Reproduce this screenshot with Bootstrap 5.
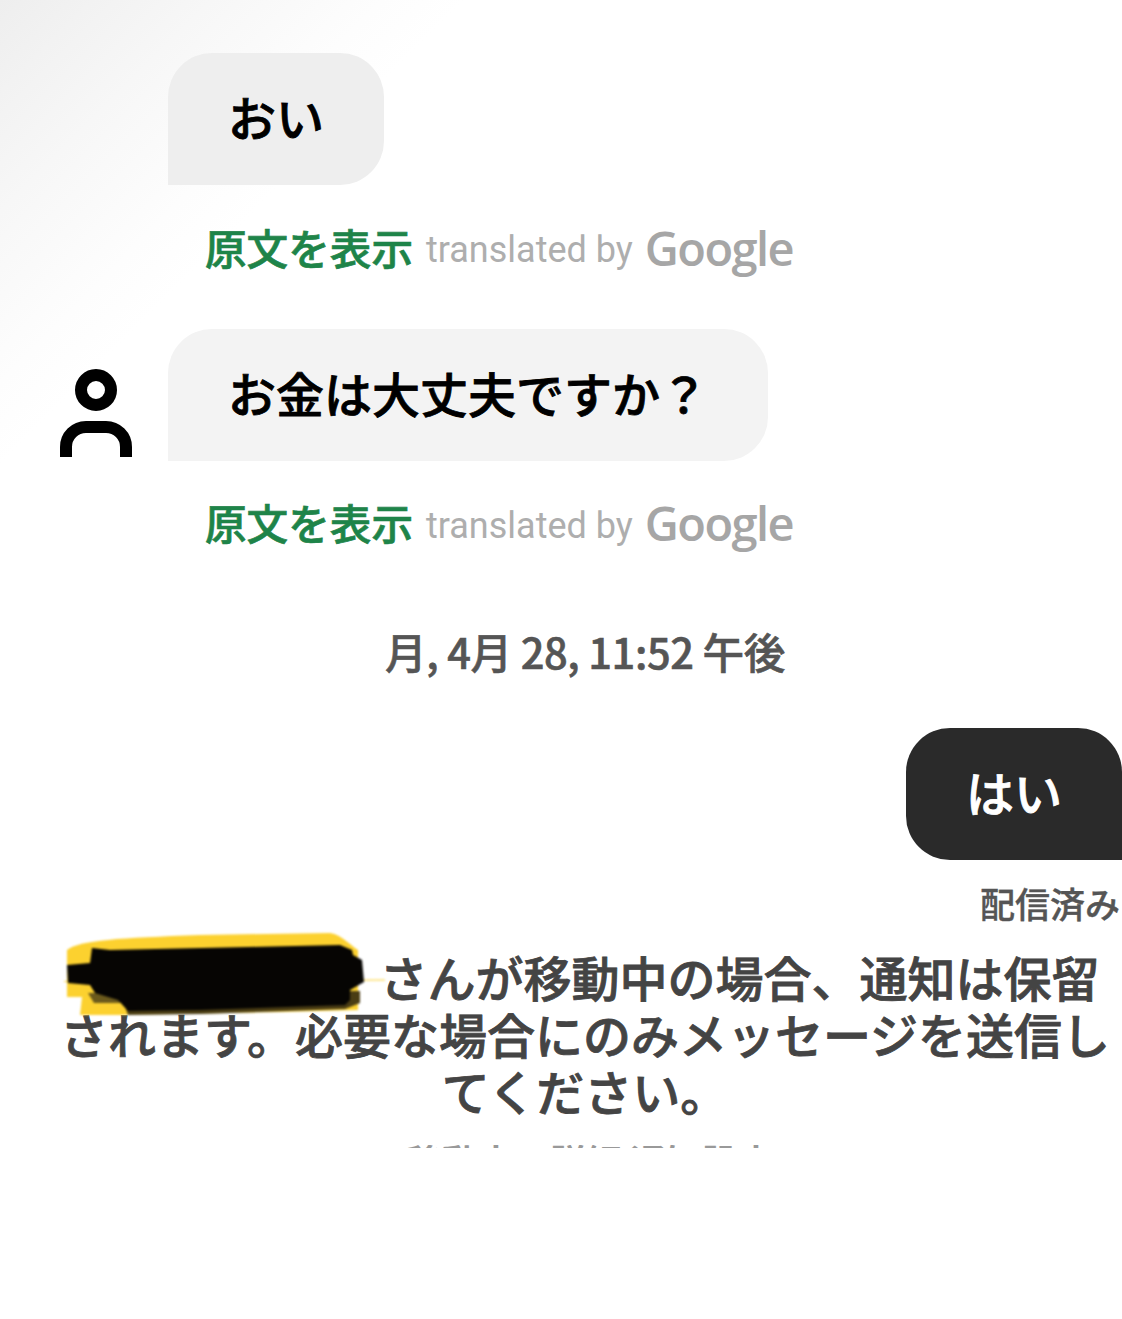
<!DOCTYPE html>
<html lang="ja">
<head>
<meta charset="utf-8">
<title>Chat</title>
<link href="https://cdn.jsdelivr.net/npm/bootstrap@5.3.0/dist/css/bootstrap.min.css" rel="stylesheet">
<style>
html,body{margin:0;background:#fff}
.chat-page{width:1122px;height:1319px;overflow:hidden;padding-top:53px;position:relative;font-family:"Noto Sans CJK JP","Noto Sans",sans-serif;background:linear-gradient(135deg,#eeeeee 0,#f7f7f7 150px,#fdfdfd 270px,#fff 330px)}
.msg-row{padding-left:60px;height:132px}
.avatar-slot{width:72px;margin-right:36px;padding-top:40px}
.bubble-in,.bubble-out{height:132px;padding:0 60px;font-size:48px;font-weight:500;-webkit-text-stroke:.8px currentColor;line-height:126px;white-space:nowrap;border-radius:44px}
.bubble-in{background:#f3f3f3;color:#000;border-bottom-left-radius:0}
.bubble-first{background:#eeeeee}
.bubble-out{background:#2a2a2a;color:#fff;border-bottom-right-radius:0}
.trans-row{height:144px;padding-left:205px;padding-bottom:20px;white-space:nowrap}
.trans-last{height:129px;padding-bottom:6px}
.orig-link{font-size:41.6px;font-weight:500;-webkit-text-stroke:.7px currentColor;color:#1e8449;margin-right:13px}
.trans-by{font-family:Roboto,sans-serif;font-size:36px;color:#aeaeae;margin-right:12px;margin-top:6px}
.g-logo{font-family:"Open Sans",sans-serif;font-size:47px;font-weight:600;color:#a6a6a6;letter-spacing:-1.6px;margin-top:2px}
.date-line{height:138px;padding-left:48px;padding-bottom:16px;font-size:41.6px;font-weight:500;-webkit-text-stroke:.6px currentColor;color:#555;letter-spacing:-.4px}
.sent-state{height:58px;margin-top:20px;padding-right:2px;font-size:35px;font-weight:500;-webkit-text-stroke:.4px currentColor;color:#555;line-height:46px}
.notice-box{font-size:48px;font-weight:500;-webkit-text-stroke:.8px currentColor;line-height:57px;color:#444;text-align:center;padding-left:48px;white-space:nowrap;margin-top:10px}
.name-gap{display:inline-block;width:309px}
.clip-line{height:3px;overflow:hidden;margin-top:26px;padding-left:58px;font-size:36px;line-height:46px;color:#999;font-weight:700;text-align:center;white-space:nowrap}
.clip-inner{margin-top:-8px}
.redact{position:absolute;left:60px;top:925px;width:330px;height:95px;filter:blur(.8px)}
</style>
</head>
<body>
<div class="chat-page">
  <div class="msg-row d-flex">
    <div class="avatar-slot"></div>
    <div class="bubble-in bubble-first">おい</div>
  </div>
  <div class="trans-row d-flex align-items-center">
    <span class="orig-link">原文を表示</span><span class="trans-by">translated by</span><span class="g-logo">Google</span>
  </div>
  <div class="msg-row d-flex">
    <div class="avatar-slot">
      <svg width="72" height="88" viewBox="0 0 72 88" class="d-block">
        <circle cx="36" cy="21" r="15" fill="none" stroke="#000" stroke-width="12"/>
        <path d="M6 88V78A20 20 0 0 1 26 58H46A20 20 0 0 1 66 78V88" fill="none" stroke="#000" stroke-width="12"/>
      </svg>
    </div>
    <div class="bubble-in">お金は大丈夫ですか？</div>
  </div>
  <div class="trans-row trans-last d-flex align-items-center">
    <span class="orig-link">原文を表示</span><span class="trans-by">translated by</span><span class="g-logo">Google</span>
  </div>
  <div class="date-line d-flex align-items-center justify-content-center">月, 4月 28, 11:52 午後</div>
  <div class="d-flex justify-content-end"><div class="bubble-out">はい</div></div>
  <div class="sent-state text-end">配信済み</div>
  <div class="notice-box"><span class="name-gap"></span>さんが移動中の場合、通知は保留<br>されます。必要な場合にのみメッセージを送信し<br>てください。</div>
  <div class="clip-line"><div class="clip-inner">移動中の詳細 通知設定</div></div>
  <svg class="redact" viewBox="0 0 330 95">
    <path d="M7 25C20 15 60 13 140 10L270 8C282 10 290 20 298 25V85L220 87L60 90L20 90L22 72L7 72Z" fill="#fcd12f"/>
    <path d="M4 56.5L325 55" stroke="#fcd12f" stroke-width="1"/>
    <path d="M60 66H300V78L285 84L140 89L68 90Z" fill="#4a3d14"/>
    <path d="M28 68H60V78H34Z" fill="#6b5a1c"/>
    <path d="M32 23L50 25L280 20L292 25L293 30L302 35L304 57L290 65V75L285 80L140 85L68 86L58 75L35 68L30 60L8 58L7 40L30 38Z" fill="#060503"/>
  </svg>
</div>
<script src="https://cdn.jsdelivr.net/npm/bootstrap@5.3.0/dist/js/bootstrap.bundle.min.js"></script>
</body>
</html>
